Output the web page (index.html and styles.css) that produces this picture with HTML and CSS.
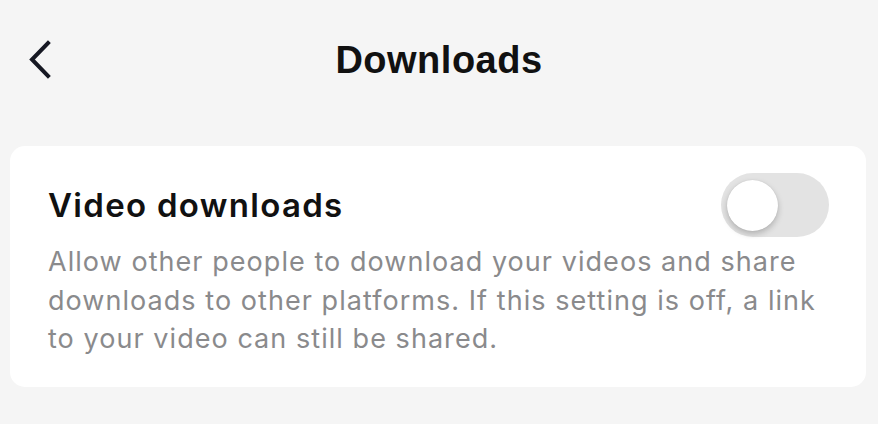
FILE: index.html
```html
<!DOCTYPE html>
<html lang="en">
<head>
    <meta charset="UTF-8">
    <title>Downloads</title>
    <meta name="viewport" content="width=device-width, initial-scale=1">
    <link rel="stylesheet" href="styles.css">
</head>
<body>
    <header class="topbar">
        <button class="back" aria-label="Back">
            <svg width="26" height="40" viewBox="0 0 26 40">
                <polyline points="21,3 5,19.5 21,36" fill="none" stroke="#161823" stroke-width="4" stroke-linecap="square" stroke-linejoin="miter"/>
            </svg>
        </button>
        <h1 class="title">Downloads</h1>
        <span></span>
    </header>

    <section class="card">
        <div class="row">
            <h2 class="label">Video downloads</h2>
            <div class="toggle" role="switch" aria-checked="false">
                <span class="knob"></span>
            </div>
        </div>
        <p class="desc">Allow other people to download your videos and share downloads to other platforms. If this setting is off, a link to your video can still be shared.</p>
    </section>
</body>
</html>
```

FILE: styles.css
```css
body {
    margin: 0;
    background-color: #f5f5f5;
    font-family: Inter, "Liberation Sans", sans-serif;
    color: #161823;
}

/* Top bar */
.topbar {
    display: grid;
    grid-template-columns: 1fr auto 1fr;
    align-items: center;
    height: 120px;
}

.back {
    justify-self: start;
    margin-left: 27px;
    padding: 0;
    border: none;
    background: none;
    display: flex;
}

.title {
    margin: 0;
    font-family: "Liberation Sans", sans-serif;
    font-size: 38px;
    font-weight: bold;
    letter-spacing: 0.5px;
    color: #111111;
}

/* Setting card */
.card {
    margin: 26px 12px 0 10px;
    padding: 27px 37px 28px 38px;
    background-color: #ffffff;
    border-radius: 15px;
}

.row {
    display: flex;
    justify-content: space-between;
    align-items: center;
    height: 64px;
}

.label {
    margin: 0;
    font-size: 33px;
    font-weight: 600;
    letter-spacing: 1.3px;
    color: #111111;
}

.toggle {
    position: relative;
    width: 108px;
    height: 64px;
    border-radius: 32px;
    background-color: #e3e3e3;
}

.knob {
    position: absolute;
    left: 6px;
    top: 7px;
    width: 51px;
    height: 51px;
    border-radius: 50%;
    background-color: #ffffff;
    box-shadow: 0 3px 6px rgba(0, 0, 0, 0.22), 0 0 1px rgba(0, 0, 0, 0.15);
}

.desc {
    margin: 6px 0 0;
    font-size: 27px;
    line-height: 38.5px;
    letter-spacing: 1.05px;
    color: #8a8a8c;
}
```
